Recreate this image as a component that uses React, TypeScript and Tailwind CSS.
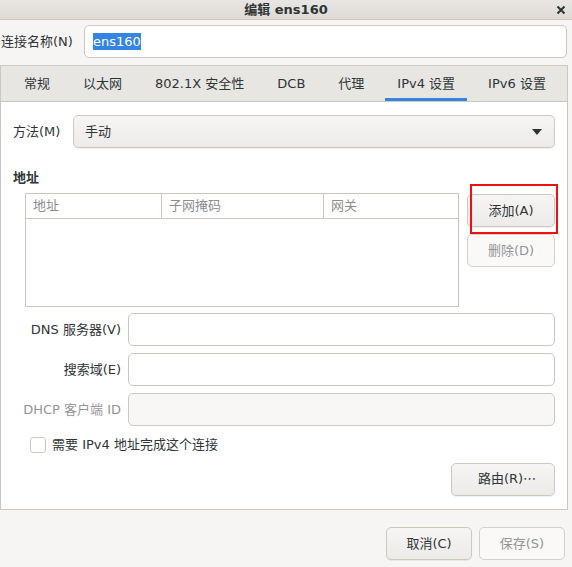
const font = "font-['DejaVu_Sans','Noto_Sans_CJK_SC',sans-serif]";

const btnBase =
  "h-[33px] rounded-[5px] border border-[#cdc7c2] bg-gradient-to-b from-[#f6f5f4] to-[#edebe9] text-[13px] text-[#2e3436] flex items-center shadow-[0_1px_0_rgba(0,0,0,0.06)]";
const btn = `${btnBase} justify-center`;
const btnOff =
  "h-[33px] rounded-[5px] border border-[#d5d0cc] bg-[#faf9f8] text-[13px] text-[#929595] flex items-center justify-center";
const entry = "h-[33px] rounded-[5px] border border-[#cdc7c2] bg-white";

const tabs = ["常规", "以太网", "802.1X 安全性", "DCB", "代理", "IPv4 设置", "IPv6 设置"];

function Field({ label, dim }: { label: string; dim?: boolean }) {
  return (
    <div className="flex items-center">
      <div className={`w-[115px] pr-[7px] text-right ${dim ? "text-[#929595]" : ""}`}>{label}</div>
      <div className={`flex-1 h-[33px] rounded-[5px] border border-[#cdc7c2] ${dim ? "bg-[#f8f7f6]" : "bg-white"}`} />
    </div>
  );
}

export default function App() {
  return (
    <div className={`w-[572px] h-[567px] bg-[#f6f5f4] text-[13px] text-[#2e3436] flex flex-col ${font}`}>
      {/* title bar */}
      <div className="h-[20px] shrink-0 border-b border-[#cdc7c2] bg-gradient-to-b from-[#e8e6e3] to-[#dedbd7] grid grid-cols-[1fr_auto_1fr] items-center">
        <div />
        <div className="font-bold text-[13px] leading-none">编辑 ens160</div>
        <div className="flex justify-end pr-[6px]">
          <svg width="10" height="10" viewBox="0 0 10 10">
            <path d="M1.5 1.5 L8.5 8.5 M8.5 1.5 L1.5 8.5" stroke="#2e3436" strokeWidth="2" />
          </svg>
        </div>
      </div>

      {/* connection name */}
      <div className="flex items-center mt-[5px] pr-[5px]">
        <div className="pl-[1px] w-[84px]">连接名称(N)</div>
        <div className={`flex-1 ${entry} flex items-center pl-[8px]`}>
          <span className="bg-[#3584e4] text-white leading-[17px]">ens160</span>
        </div>
      </div>

      {/* notebook */}
      <div className="mt-[7px] mr-[4px] border border-[#cdc7c2] flex flex-col bg-white h-[445px]">
        <div className="h-[36px] shrink-0 bg-[#e8e6e3] border-b border-[#cdc7c2] flex items-end pl-[11px] gap-[9px]">
          {tabs.map((t) => (
            <div
              key={t}
              className={`h-full flex items-center px-[12px] pt-[3px] border-b-[3px] ${
                t === "IPv4 设置" ? "border-[#3584e4]" : "border-transparent"
              }`}
            >
              {t}
            </div>
          ))}
        </div>

        <div className="flex-1 flex flex-col px-[12px] pt-[13px]">
          {/* method */}
          <div className="flex items-center">
            <div className="w-[60px]">方法(M)</div>
            <div className={`flex-1 ${btnBase} justify-between pl-[11px] pr-[12px]`}>
              <span>手动</span>
              <svg width="10" height="6" viewBox="0 0 10 6">
                <path d="M0 0 H10 L5 6 Z" fill="#2e3436" />
              </svg>
            </div>
          </div>

          <div className="font-bold mt-[22px] leading-[16px]">地址</div>

          <div className="flex mt-[7px] gap-[8px] pl-[12px]">
            <div className="w-[434px] h-[114px] border border-[#cdc7c2] flex flex-col">
              <div className="h-[25px] border-b border-[#cdc7c2] grid grid-cols-[135px_162px_1fr] text-[#8b8e8f]">
                <div className="pl-[7px] flex items-center">地址</div>
                <div className="pl-[7px] flex items-center border-l border-[#cdc7c2]">子网掩码</div>
                <div className="pl-[7px] flex items-center border-l border-[#cdc7c2]">网关</div>
              </div>
            </div>
            <div className="flex-1 flex flex-col gap-[7px] mt-[1px]">
              <div className="relative">
                <div className={btn}>添加(A)</div>
                <div className="absolute left-[3px] -right-[3px] -top-[10px] -bottom-[7px] border-2 border-[#f01010]" />
              </div>
              <div className={btnOff}>删除(D)</div>
            </div>
          </div>

          <div className="flex flex-col gap-[7px] mt-[6px]">
            <Field label="DNS 服务器(V)" />
            <Field label="搜索域(E)" />
            <Field label="DHCP 客户端 ID" dim />
          </div>

          <div className="flex items-center mt-[9px] pl-[17px] gap-[6px]">
            <div className="w-[16px] h-[16px] rounded-[3px] border border-[#cdc7c2] bg-white" />
            <span>需要 IPv4 地址完成这个连接</span>
          </div>

          <div className="flex justify-end mt-[8px]">
            <div className={`${btn} w-[104px] pl-[8px]`}>路由(R)⋯</div>
          </div>
        </div>
      </div>

      {/* bottom buttons */}
      <div className="flex justify-end gap-[7px] pr-[7px] mt-[17px]">
        <div className={`${btn} w-[86px]`}>取消(C)</div>
        <div className={`${btnOff} w-[86px]`}>保存(S)</div>
      </div>
    </div>
  );
}
